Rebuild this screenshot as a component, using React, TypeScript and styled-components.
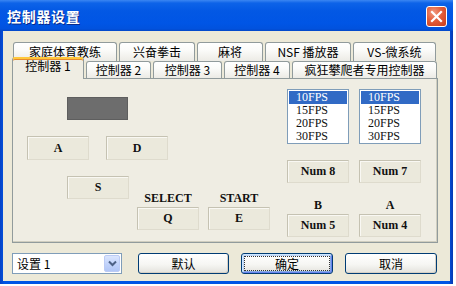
import React from "react";
import styled, { createGlobalStyle } from "styled-components";

const GlobalStyle = createGlobalStyle`
  html, body {
    margin: 0;
    padding: 0;
    background: #ffffff;
  }
  body {
    font-family: "Noto Sans CJK SC", "Noto Sans", sans-serif;
  }
`;

const SONG = `"Noto Sans CJK SC", "Noto Sans", sans-serif`;
const SERIF = `"Liberation Serif", "Noto Sans CJK SC", serif`;

const row1Tabs = [
  { label: "家庭体育教练", width: 104 },
  { label: "兴奋拳击", width: 76 },
  { label: "麻将", width: 66 },
  { label: "NSF 播放器", width: 86 },
  { label: "VS-微系统", width: 83 },
];

const row2Tabs = [
  { label: "控制器 1", width: 72, active: true },
  { label: "控制器 2", width: 65 },
  { label: "控制器 3", width: 69 },
  { label: "控制器 4", width: 66 },
  { label: "疯狂攀爬者专用控制器", width: 145 },
];

const fpsOptions = ["10FPS", "15FPS", "20FPS", "30FPS"];

const App: React.FC = () => {
  return (
    <>
      <GlobalStyle />
      <Window>
        <TitleBar>
          <Title>控制器设置</Title>
          <CloseButton>
            <svg width="13" height="13" viewBox="0 0 13 13">
              <path d="M2 2 L11 11 M11 2 L2 11" stroke="#ffffff" strokeWidth="2.2" strokeLinecap="square" />
            </svg>
          </CloseButton>
        </TitleBar>
        <Client>
          <TabRow $indent={1}>
            {row1Tabs.map((t) => (
              <Tab key={t.label} $width={t.width}>
                {t.label}
              </Tab>
            ))}
          </TabRow>
          <TabRow $indent={1} $height={17}>
            {row2Tabs.map((t) =>
              t.active ? (
                <ActiveTab key={t.label} $width={t.width}>
                  {t.label}
                </ActiveTab>
              ) : (
                <Tab key={t.label} $width={t.width} $height={17}>
                  {t.label}
                </Tab>
              )
            )}
          </TabRow>
          <Panel>
            <LeftStack>
              <Preview />
              <KeyPair $gap={17}>
                <KeyBox $height={24}>A</KeyBox>
                <KeyBox $height={24}>D</KeyBox>
              </KeyPair>
              <KeyBox $indent={40}>S</KeyBox>
            </LeftStack>
            <MiddleStack>
              <KeyPair $gap={9}>
                <LabeledKey>
                  <KeyLabel>SELECT</KeyLabel>
                  <KeyBox>Q</KeyBox>
                </LabeledKey>
                <LabeledKey>
                  <KeyLabel>START</KeyLabel>
                  <KeyBox>E</KeyBox>
                </LabeledKey>
              </KeyPair>
            </MiddleStack>
            <RightStack>
              <KeyPair $gap={10}>
                {[0, 1].map((i) => (
                  <ListBox key={i}>
                    {fpsOptions.map((o, j) => (
                      <ListItem key={o} $selected={j === 0}>
                        {o}
                      </ListItem>
                    ))}
                  </ListBox>
                ))}
              </KeyPair>
              <KeyPair $gap={10}>
                <KeyBox>Num 8</KeyBox>
                <KeyBox>Num 7</KeyBox>
              </KeyPair>
              <KeyPair $gap={10}>
                <LabeledKey>
                  <KeyLabel>B</KeyLabel>
                  <KeyBox>Num 5</KeyBox>
                </LabeledKey>
                <LabeledKey>
                  <KeyLabel>A</KeyLabel>
                  <KeyBox>Num 4</KeyBox>
                </LabeledKey>
              </KeyPair>
            </RightStack>
          </Panel>
          <BottomBar>
            <Combo>
              <ComboText>设置 1</ComboText>
              <ComboArrow>
                <svg width="9" height="7" viewBox="0 0 9 7">
                  <path d="M1 1.5 L4.5 5 L8 1.5" stroke="#4d6185" strokeWidth="2" fill="none" />
                </svg>
              </ComboArrow>
            </Combo>
            <Buttons>
              <PushButton $width={91}>默认</PushButton>
              <PushButton $width={92} $default>
                <FocusRect>确定</FocusRect>
              </PushButton>
              <PushButton $width={92}>取消</PushButton>
            </Buttons>
          </BottomBar>
        </Client>
      </Window>
    </>
  );
};

const Window = styled.div`
  width: 453px;
  height: 284px;
  display: flex;
  flex-direction: column;
  background: linear-gradient(90deg, #0842c4 0%, #0055e5 1%, #0055e5 99%, #0838b0 100%);
`;

const TitleBar = styled.div`
  height: 31px;
  flex-shrink: 0;
  display: flex;
  align-items: center;
  justify-content: space-between;
  padding: 1px 6px 0 7px;
  box-sizing: border-box;
  background: linear-gradient(
    #3b86f2 0%,
    #0d63e8 10%,
    #0358e4 35%,
    #0055e5 75%,
    #0152de 92%,
    #0348c8 100%
  );
`;

const Title = styled.span`
  color: #ffffff;
  font-family: ${SONG};
  font-weight: 700;
  font-size: 14px;
  letter-spacing: 0.7px;
  text-shadow: 1px 1px 0 #0b2a8a;
`;

const CloseButton = styled.div`
  width: 21px;
  height: 21px;
  box-sizing: border-box;
  border: 1px solid #ffffff;
  border-radius: 3px;
  display: flex;
  align-items: center;
  justify-content: center;
  background: radial-gradient(circle at 35% 30%, #f09a80 0%, #e35d3a 45%, #c83c1c 100%);
`;

const Client = styled.div`
  flex: 1;
  margin: 0 3px 3px 3px;
  background: #ece9d8;
  padding: 11px 0 0 9px;
  display: flex;
  flex-direction: column;
`;

const TabRow = styled.div<{ $indent: number; $height?: number }>`
  display: flex;
  align-items: flex-end;
  gap: 2px;
  margin-left: ${(p) => p.$indent}px;
  height: ${(p) => p.$height ?? 19}px;
`;

const Tab = styled.div<{ $width: number; $height?: number }>`
  width: ${(p) => p.$width}px;
  height: ${(p) => p.$height ?? 19}px;
  box-sizing: border-box;
  flex-shrink: 0;
  border: 1px solid #919b9c;
  border-bottom: none;
  border-radius: 3px 3px 0 0;
  background: linear-gradient(#ffffff 0%, #fbfbf9 40%, #ecebe5 100%);
  font-family: ${SONG};
  font-size: 12px;
  line-height: 12px;
  color: #000000;
  display: flex;
  align-items: center;
  justify-content: center;
  white-space: nowrap;
`;

const ActiveTab = styled(Tab)`
  position: relative;
  z-index: 1;
  height: 22px;
  margin-bottom: -1px;
  margin-left: -1px;
  background: #efede3;
  border-top: 2px solid #ffc83c;
  box-shadow: inset 0 1px 0 #e68b2c;
  padding-top: 1px;
  padding-bottom: 7px;
`;

const Panel = styled.div`
  width: 426px;
  height: 165px;
  box-sizing: border-box;
  border: 1px solid #919b9c;
  background: #efede3;
  box-shadow: inset -1px -1px 0 #d0cebf;
  padding: 10px 0 0 14px;
  display: grid;
  grid-template-columns: 110px 31px 102px 17px 134px;
  grid-template-rows: 141px;
`;

const LeftStack = styled.div`
  grid-column: 1 / 3;
  grid-row: 1;
  display: flex;
  flex-direction: column;
  align-items: flex-start;
  gap: 16px;
  padding-top: 8px;
`;

const MiddleStack = styled.div`
  grid-column: 2 / 4;
  grid-row: 1;
  align-self: end;
`;

const RightStack = styled.div`
  grid-column: 5;
  grid-row: 1;
  display: flex;
  flex-direction: column;
  gap: 16px;
`;

const Preview = styled.div`
  width: 61px;
  height: 23px;
  margin-left: 40px;
  background: #6d6d6d;
  box-shadow: inset 0 0 0 1px #5e5e5e;
`;

const KeyPair = styled.div<{ $gap: number }>`
  display: flex;
  align-items: flex-end;
  gap: ${(p) => p.$gap}px;
`;

const KeyBox = styled.div<{ $height?: number; $indent?: number }>`
  width: 62px;
  height: ${(p) => p.$height ?? 23}px;
  margin-left: ${(p) => p.$indent ?? 0}px;
  box-sizing: border-box;
  border: 1px solid #c5c2b2;
  border-right-color: #dedbcd;
  border-bottom-color: #dedbcd;
  box-shadow: inset 1px 1px 0 #f9f8f3;
  background: #ebe9dc;
  font-family: ${SERIF};
  font-weight: 700;
  font-size: 12px;
  color: #111111;
  display: flex;
  align-items: center;
  justify-content: center;
  white-space: pre;
`;

const LabeledKey = styled.div`
  display: flex;
  flex-direction: column;
  align-items: center;
  gap: 2px;
`;

const KeyLabel = styled.div`
  height: 13px;
  line-height: 13px;
  font-family: ${SERIF};
  font-weight: 700;
  font-size: 12px;
  color: #111111;
`;

const ListBox = styled.div`
  width: 62px;
  height: 55px;
  box-sizing: border-box;
  border: 1px solid #7f9db9;
  background: #ffffff;
  padding: 1px;
  display: flex;
  flex-direction: column;
`;

const ListItem = styled.div<{ $selected?: boolean }>`
  height: 13px;
  line-height: 13px;
  padding-left: 7px;
  font-family: ${SERIF};
  font-size: 12px;
  color: ${(p) => (p.$selected ? "#ffffff" : "#111111")};
  background: ${(p) => (p.$selected ? "#316ac5" : "transparent")};
`;

const BottomBar = styled.div`
  display: flex;
  align-items: flex-start;
  margin-top: 10px;
`;

const Combo = styled.div`
  width: 110px;
  height: 21px;
  box-sizing: border-box;
  border: 1px solid #7f9db9;
  background: #ffffff;
  display: flex;
  align-items: center;
  justify-content: space-between;
  padding: 1px;
`;

const ComboText = styled.span`
  font-family: ${SONG};
  font-size: 12px;
  color: #000000;
  padding-left: 3px;
`;

const ComboArrow = styled.div`
  width: 16px;
  height: 17px;
  box-sizing: border-box;
  border: 1px solid #bbcbf5;
  border-radius: 2px;
  background: linear-gradient(#dbe6fe 0%, #c3d4fb 50%, #b1c6f6 100%);
  display: flex;
  align-items: center;
  justify-content: center;
`;

const Buttons = styled.div`
  display: flex;
  gap: 12px;
  margin-left: 16px;
`;

const PushButton = styled.div<{ $width: number; $default?: boolean }>`
  width: ${(p) => p.$width}px;
  height: 21px;
  box-sizing: border-box;
  border: 1px solid #003c74;
  border-radius: 3px;
  background: linear-gradient(#ffffff 0%, #f6f6f3 55%, #e3e2dc 100%);
  box-shadow: ${(p) =>
    p.$default
      ? "inset 1px 1px 0 #cee7ff, inset -1px -1px 0 #6982ee, inset 2px 2px 0 #bcd4f6, inset -2px -2px 0 #89ade4"
      : "inset -1px -1px 0 #d6d0c5"};
  font-family: ${SONG};
  font-size: 12px;
  color: #000000;
  display: flex;
  align-items: center;
  justify-content: center;
  padding: 2px;
`;

const FocusRect = styled.div`
  flex: 1;
  align-self: stretch;
  border: 1px dotted #333333;
  display: flex;
  align-items: center;
  justify-content: center;
`;

export default App;
